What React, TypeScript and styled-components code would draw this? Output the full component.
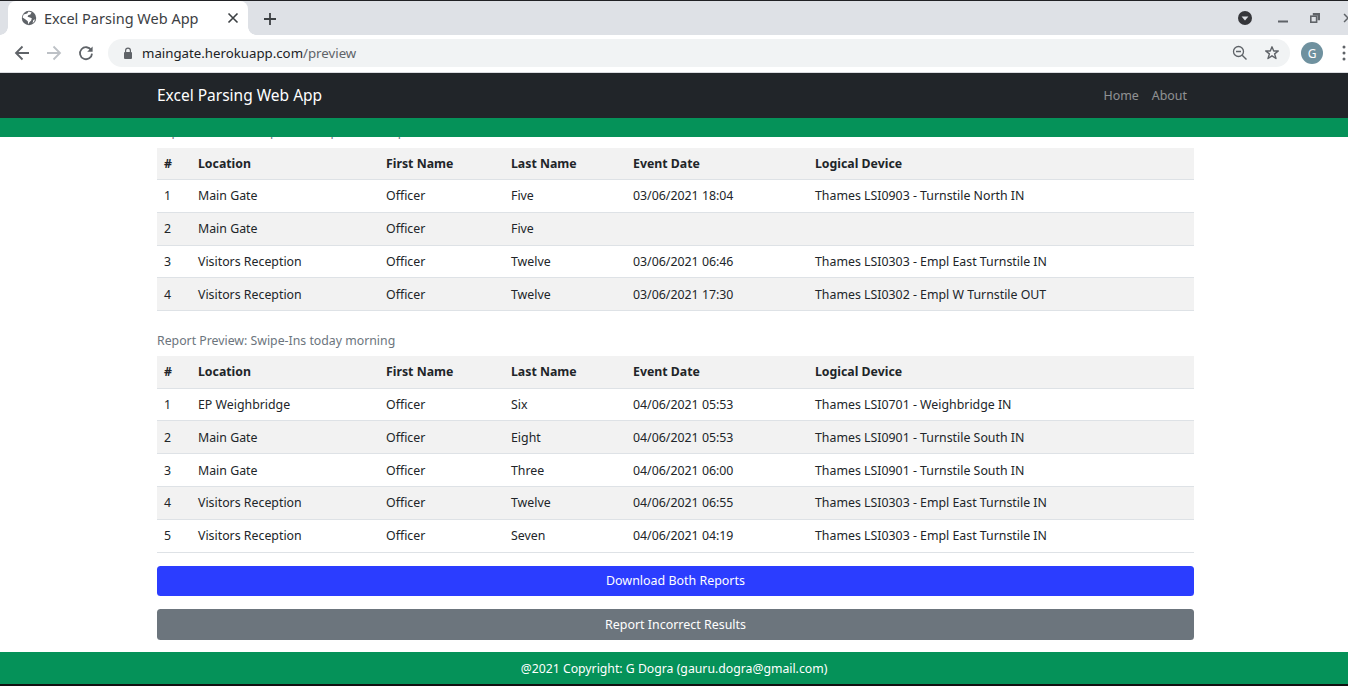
import React from "react";
import styled, { createGlobalStyle } from "styled-components";

const Global = createGlobalStyle`
  html, body { margin: 0; padding: 0; background: #fff; }
  body { font-family: "Noto Sans", "Open Sans", sans-serif; color: #212529; overflow: hidden; }
  #root { height: 686px; }
`;

const Page = styled.div`
  width: 1348px;
  height: 686px;
  display: flex;
  flex-direction: column;
  overflow: hidden;
  background: #fff;
  border-top: 1px solid #202124;
  box-sizing: border-box;
`;

const TabStrip = styled.div`
  height: 34px;
  background: #dee1e6;
  display: flex;
  align-items: flex-end;
  padding-left: 8px;
  flex: none;
`;

const Tab = styled.div`
  position: relative;
  width: 240px;
  height: 34px;
  background: #fff;
  border-radius: 8px 8px 0 0;
  display: flex;
  align-items: center;
  box-sizing: border-box;
  padding-left: 13px;
  font-size: 14.5px;
  color: #3c4043;
  gap: 7px;

  &::before,
  &::after {
    content: "";
    position: absolute;
    bottom: 0;
    width: 8px;
    height: 8px;
  }
  &::before {
    left: -8px;
    background: radial-gradient(circle at 0 0, #dee1e6 7.5px, #fff 8px);
  }
  &::after {
    right: -8px;
    background: radial-gradient(circle at 100% 0, #dee1e6 7.5px, #fff 8px);
  }
`;

const TabTitle = styled.span`
  flex: 1;
  white-space: nowrap;
`;

const TabClose = styled.span`
  width: 16px;
  display: flex;
  margin-right: 7px;
`;

const NewTab = styled.span`
  display: flex;
  margin-left: 15px;
  margin-bottom: 9px;
`;

const WindowControls = styled.div`
  margin-left: auto;
  display: flex;
  align-items: center;
  height: 34px;
  margin-right: -24px;
  flex: none;
`;

const ControlSlot = styled.span<{ $w: number }>`
  display: flex;
  width: ${(p) => p.$w}px;
  justify-content: center;
`;

const Toolbar = styled.div`
  height: 36px;
  flex: none;
  background: #fff;
  display: flex;
  align-items: center;
  border-bottom: 1px solid #dadce0;
  padding-bottom: 1px;
`;

const NavIcons = styled.div`
  display: flex;
  align-items: center;
  width: 108px;
  padding-left: 14px;
  box-sizing: border-box;
  gap: 16px;
`;

const Omnibox = styled.div`
  width: 1182px;
  height: 28px;
  border-radius: 14px;
  background: #f1f3f4;
  display: flex;
  align-items: center;
  box-sizing: border-box;
  padding-left: 15px;
  font-size: 13.25px;
  flex: none;
`;

const Url = styled.span`
  margin-left: 9px;
  color: #202124;
  flex: 1;
`;

const UrlPath = styled.span`
  color: #5f6368;
`;

const OmniIcon = styled.span<{ $mr: number }>`
  display: flex;
  margin-right: ${(p) => p.$mr}px;
`;

const Avatar = styled.span`
  width: 22px;
  height: 22px;
  border-radius: 50%;
  background: #6f919f;
  color: #fff;
  font-size: 12px;
  display: flex;
  align-items: center;
  justify-content: center;
  margin-left: 11px;
  flex: none;
`;

const Kebab = styled.span`
  display: flex;
  margin-left: 19px;
  flex: none;
`;

const Navbar = styled.nav`
  height: 45px;
  flex: none;
  background: #212529;
  display: flex;
  align-items: center;
  box-sizing: border-box;
  padding: 0 161px 2px 157px;
`;

const Brand = styled.span`
  color: #fff;
  font-size: 15.5px;
  flex: 1;
`;

const NavLink = styled.span`
  color: rgba(255, 255, 255, 0.5);
  font-size: 12.4px;
  margin-left: 13px;
  padding-top: 2px;
`;

const GreenBar = styled.div`
  height: 19px;
  flex: none;
  background: #059259;
`;

const Main = styled.main`
  flex: 1;
  min-height: 0;
  overflow: hidden;
  padding: 0 154px 0 157px;
`;

const Caption = styled.p<{ $lead?: boolean }>`
  margin: ${(p) => (p.$lead ? "-15px 0 0" : "20.2px 0 0")};
  height: ${(p) => (p.$lead ? "26px" : "25px")};
  line-height: 19px;
  font-size: 12.3px;
  color: #6c757d;
  white-space: nowrap;
`;

const Table = styled.table`
  width: 1037px;
  table-layout: fixed;
  border-collapse: collapse;
  font-size: 12.35px;
  line-height: 18px;
`;

const Row = styled.tr<{ $odd: boolean }>`
  background: ${(p) => (p.$odd ? "#f2f2f2" : "#fff")};
`;

const Head = styled.th`
  height: 31.6px;
  padding: 0.6px 0 0 7px;
  text-align: left;
  font-weight: 700;
  font-size: 12.3px;
  border-bottom: 1px solid #dee2e6;
  box-sizing: border-box;
`;

const Cell = styled.td`
  height: 32.8px;
  padding: 1px 0 0 7px;
  border-bottom: 1px solid #dee2e6;
  box-sizing: border-box;
  white-space: nowrap;
`;

const Action = styled.button<{ $bg: string; $h: number; $mt: number; $pb: number }>`
  display: block;
  width: 1037px;
  height: ${(p) => p.$h}px;
  margin-top: ${(p) => p.$mt}px;
  border: 0;
  border-radius: 3.5px;
  background: ${(p) => p.$bg};
  color: #fff;
  font: 12.45px "Noto Sans", "Open Sans", sans-serif;
  padding: 0 0 ${(p) => p.$pb}px;
`;

const Footer = styled.footer`
  height: 32px;
  flex: none;
  background: #059259;
  color: #fff;
  font-size: 12.25px;
  display: flex;
  align-items: center;
  justify-content: center;
`;

const BottomEdge = styled.div`
  height: 2px;
  flex: none;
  background: #111;
`;

const widths = [34, 188, 125, 122, 182, 386];
const headers = ["#", "Location", "First Name", "Last Name", "Event Date", "Logical Device"];

const first = [
  ["1", "Main Gate", "Officer", "Five", "03/06/2021 18:04", "Thames LSI0903 - Turnstile North IN"],
  ["2", "Main Gate", "Officer", "Five", "", ""],
  ["3", "Visitors Reception", "Officer", "Twelve", "03/06/2021 06:46", "Thames LSI0303 - Empl East Turnstile IN"],
  ["4", "Visitors Reception", "Officer", "Twelve", "03/06/2021 17:30", "Thames LSI0302 - Empl W Turnstile OUT"],
];

const second = [
  ["1", "EP Weighbridge", "Officer", "Six", "04/06/2021 05:53", "Thames LSI0701 - Weighbridge IN"],
  ["2", "Main Gate", "Officer", "Eight", "04/06/2021 05:53", "Thames LSI0901 - Turnstile South IN"],
  ["3", "Main Gate", "Officer", "Three", "04/06/2021 06:00", "Thames LSI0901 - Turnstile South IN"],
  ["4", "Visitors Reception", "Officer", "Twelve", "04/06/2021 06:55", "Thames LSI0303 - Empl East Turnstile IN"],
  ["5", "Visitors Reception", "Officer", "Seven", "04/06/2021 04:19", "Thames LSI0303 - Empl East Turnstile IN"],
];

function Report({ rows }: { rows: string[][] }) {
  return (
    <Table>
      <colgroup>
        {widths.map((w, i) => (
          <col key={i} width={w} />
        ))}
      </colgroup>
      <thead>
        <Row $odd>
          {headers.map((h) => (
            <Head key={h}>{h}</Head>
          ))}
        </Row>
      </thead>
      <tbody>
        {rows.map((r, i) => (
          <Row key={i} $odd={i % 2 === 1}>
            {r.map((c, j) => (
              <Cell key={j}>{c}</Cell>
            ))}
          </Row>
        ))}
      </tbody>
    </Table>
  );
}

const Globe = () => (
  <svg width="16" height="16" viewBox="0 0 16 16">
    <circle cx="8" cy="8" r="7.2" fill="#5f6368" />
    <path d="M2.6 4.4 6.2 3.4 7.6 1.6 10.6 2.4 9.4 4.6 7.2 5.2 6.6 6.8 9 7.4 10.8 8.2 10.2 10.4 8.2 12.4 7.2 14.4 6.8 11.2 4.6 9.4 1.6 7.4Z" fill="#fff" />
    <path d="M12.2 10.2 14 9.2 13.2 11.6 11.6 13.2Z" fill="#fff" />
  </svg>
);

const X = ({ size, color, w }: { size: number; color: string; w: number }) => (
  <svg width={size} height={size} viewBox="0 0 16 16">
    <path d="M3.5 3.5 12.5 12.5M12.5 3.5 3.5 12.5" stroke={color} strokeWidth={w} fill="none" />
  </svg>
);

const Arrow = ({ color, flip }: { color: string; flip?: boolean }) => (
  <svg width="16" height="16" viewBox="0 0 16 16" style={flip ? { transform: "scaleX(-1)" } : undefined}>
    <path d="M15 8H2M8.5 1.5 2 8l6.5 6.5" stroke={color} strokeWidth="1.8" fill="none" />
  </svg>
);

const Reload = () => (
  <svg width="16" height="16" viewBox="0 0 16 16">
    <path d="M13.2 5.2A6 6 0 1 0 14 8.6" stroke="#5f6368" strokeWidth="1.8" fill="none" />
    <path d="M14.6 1.4v5.4H9.2Z" fill="#5f6368" />
  </svg>
);

const Lock = () => (
  <svg width="10" height="13" viewBox="0 0 10 13">
    <path d="M2.6 5V3.6a2.4 2.4 0 0 1 4.8 0V5" stroke="#5f6368" strokeWidth="1.2" fill="none" />
    <rect x="1" y="5" width="8" height="7" rx="1" fill="#5f6368" />
  </svg>
);

const Zoom = () => (
  <svg width="16" height="16" viewBox="0 0 16 16">
    <circle cx="6.5" cy="6.5" r="5" stroke="#5f6368" strokeWidth="1.3" fill="none" />
    <path d="M4 6.5h5M10.2 10.2 14.5 14.5" stroke="#5f6368" strokeWidth="1.4" fill="none" />
  </svg>
);

const Star = () => (
  <svg width="16" height="16" viewBox="0 0 16 16">
    <path d="M8 1.8 9.7 6h4.6l-3.7 2.9 1.4 4.6L8 10.8l-4 2.7 1.4-4.6L1.7 6h4.6Z" stroke="#5f6368" strokeWidth="1.4" fill="none" strokeLinejoin="round" />
  </svg>
);

const Dots = () => (
  <svg width="4" height="16" viewBox="0 0 4 16">
    <circle cx="2" cy="2" r="1.5" fill="#5f6368" />
    <circle cx="2" cy="8" r="1.5" fill="#5f6368" />
    <circle cx="2" cy="14" r="1.5" fill="#5f6368" />
  </svg>
);

const Badge = () => (
  <svg width="14" height="14" viewBox="0 0 14 14">
    <circle cx="7" cy="7" r="7" fill="#35363a" />
    <path d="M3.6 5.4h6.8L7 9.6Z" fill="#dee1e6" />
  </svg>
);

const Minimize = () => (
  <svg width="10" height="10" viewBox="0 0 10 10">
    <rect x="0" y="7.5" width="10" height="2" fill="#5f6368" />
  </svg>
);

const Restore = () => (
  <svg width="10" height="10" viewBox="0 0 10 10">
    <path d="M2.8 0h7.2v7.2H7.6V2.4H2.8Z" fill="#5f6368" />
    <rect x="0.8" y="3.2" width="5.8" height="6" stroke="#5f6368" strokeWidth="1.6" fill="none" />
  </svg>
);

export default function App() {
  return (
    <Page>
      <Global />
      <TabStrip>
        <Tab>
          <Globe />
          <TabTitle>Excel Parsing Web App</TabTitle>
          <TabClose>
            <X size={16} color="#3c4043" w={1.6} />
          </TabClose>
        </Tab>
        <NewTab>
          <svg width="14" height="14" viewBox="0 0 14 14">
            <path d="M7 1v12M1 7h12" stroke="#3c4043" strokeWidth="1.8" />
          </svg>
        </NewTab>
        <WindowControls>
          <ControlSlot $w={30}>
            <Badge />
          </ControlSlot>
          <ControlSlot $w={46}>
            <Minimize />
          </ControlSlot>
          <ControlSlot $w={18}>
            <Restore />
          </ControlSlot>
          <ControlSlot $w={48}>
            <X size={14} color="#5f6368" w={1.8} />
          </ControlSlot>
        </WindowControls>
      </TabStrip>
      <Toolbar>
        <NavIcons>
          <Arrow color="#5f6368" />
          <Arrow color="#bdc1c6" flip />
          <Reload />
        </NavIcons>
        <Omnibox>
          <Lock />
          <Url>
            maingate.herokuapp.com<UrlPath>/preview</UrlPath>
          </Url>
          <OmniIcon $mr={16}>
            <Zoom />
          </OmniIcon>
          <OmniIcon $mr={10}>
            <Star />
          </OmniIcon>
        </Omnibox>
        <Avatar>G</Avatar>
        <Kebab>
          <Dots />
        </Kebab>
      </Toolbar>
      <Navbar>
        <Brand>Excel Parsing Web App</Brand>
        <NavLink>Home</NavLink>
        <NavLink>About</NavLink>
      </Navbar>
      <GreenBar />
      <Main>
        <Caption $lead>Report Preview: Swipe-Ins/Swipe-Outs on previous shift</Caption>
        <Report rows={first} />
        <Caption>Report Preview: Swipe-Ins today morning</Caption>
        <Report rows={second} />
        <Action $bg="#2b3dff" $h={30} $mt={13.4} $pb={1}>
          Download Both Reports
        </Action>
        <Action $bg="#6c757d" $h={31} $mt={13} $pb={0}>
          Report Incorrect Results
        </Action>
      </Main>
      <Footer>@2021 Copyright: G Dogra (gauru.dogra@gmail.com)</Footer>
      <BottomEdge />
    </Page>
  );
}
